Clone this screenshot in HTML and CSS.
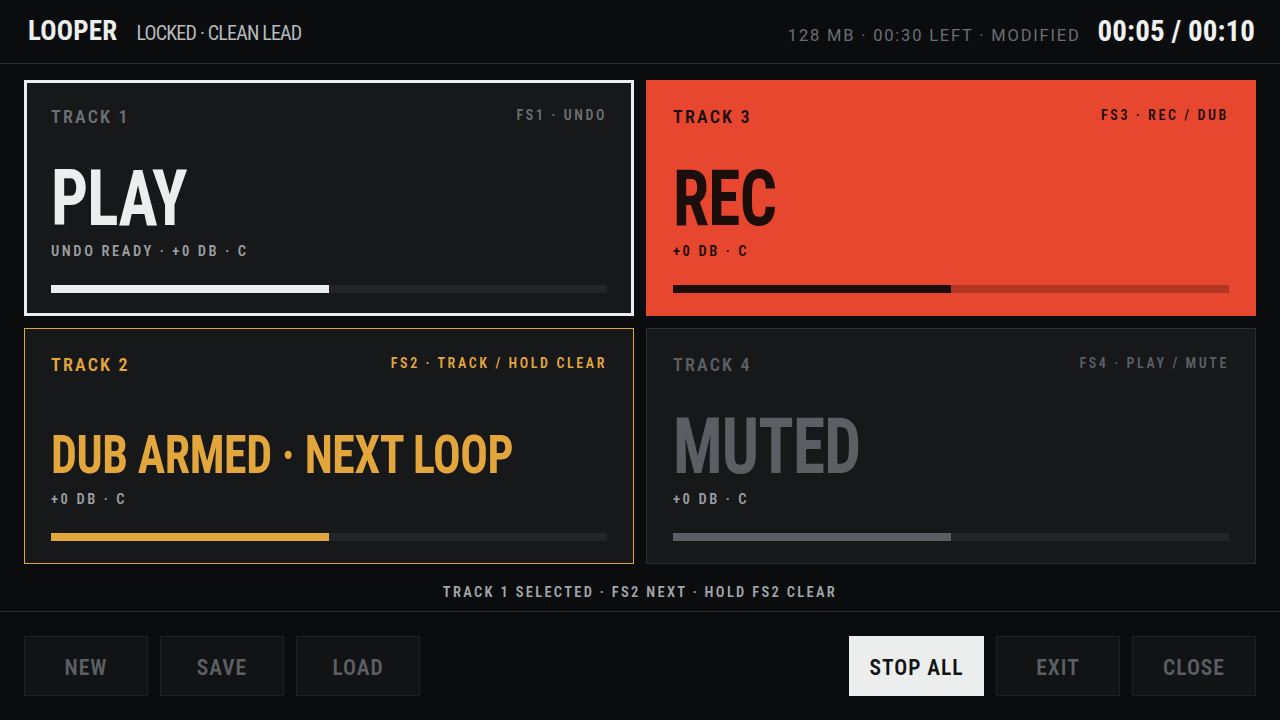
FILE: index.html
```html
<!DOCTYPE html>
<html lang="en">
<head>
<meta charset="utf-8">
<title>Looper</title>
<link rel="stylesheet" href="styles.css">
</head>
<body>
<div class="app">
  <header class="topbar">
    <div class="brand">
      <span class="logo">LOOPER</span>
      <span class="preset">LOCKED · CLEAN LEAD</span>
    </div>
    <div class="meta">
      <span class="info">128 MB · 00:30 LEFT · MODIFIED</span>
      <span class="time">00:05 / 00:10</span>
    </div>
  </header>

  <main class="grid">
    <section class="card card-play is-selected">
      <div class="card-head"><span class="track">TRACK 1</span><span class="hint">FS1 · UNDO</span></div>
      <div class="state">PLAY</div>
      <div class="sub">UNDO READY · +0 DB · C</div>
      <div class="bar"><div class="fill" style="width:50%"></div></div>
    </section>
    <section class="card card-rec">
      <div class="card-head"><span class="track">TRACK 3</span><span class="hint">FS3 · REC / DUB</span></div>
      <div class="state">REC</div>
      <div class="sub">+0 DB · C</div>
      <div class="bar"><div class="fill" style="width:50%"></div></div>
    </section>
    <section class="card card-dub">
      <div class="card-head"><span class="track">TRACK 2</span><span class="hint">FS2 · TRACK / HOLD CLEAR</span></div>
      <div class="state state-long">DUB ARMED · NEXT LOOP</div>
      <div class="sub">+0 DB · C</div>
      <div class="bar"><div class="fill" style="width:50%"></div></div>
    </section>
    <section class="card card-muted">
      <div class="card-head"><span class="track">TRACK 4</span><span class="hint">FS4 · PLAY / MUTE</span></div>
      <div class="state">MUTED</div>
      <div class="sub">+0 DB · C</div>
      <div class="bar"><div class="fill" style="width:50%"></div></div>
    </section>
  </main>

  <div class="status">TRACK 1 SELECTED · FS2 NEXT · HOLD FS2 CLEAR</div>

  <footer class="actions">
    <div class="group">
      <button class="btn">NEW</button>
      <button class="btn">SAVE</button>
      <button class="btn">LOAD</button>
    </div>
    <div class="group">
      <button class="btn btn-primary">STOP ALL</button>
      <button class="btn">EXIT</button>
      <button class="btn">CLOSE</button>
    </div>
  </footer>
</div>
</body>
</html>
```

FILE: styles.css
```css
* { box-sizing: border-box; }

html, body {
  margin: 0;
  padding: 0;
  background: #0b0c0e;
}

body {
  font-family: Roboto, "Open Sans", "DejaVu Sans Condensed", sans-serif;
  font-stretch: 75%;
  color: #eceeee;
}

.app {
  width: 1280px;
  height: 720px;
  display: flex;
  flex-direction: column;
  overflow: hidden;
}

/* Top bar */
.topbar {
  height: 64px;
  flex: none;
  display: flex;
  align-items: center;
  justify-content: space-between;
  padding: 0 25px 2px 28px;
  border-bottom: 1px solid #2a2c2f;
}

.brand {
  display: flex;
  align-items: baseline;
  gap: 19px;
}

.logo {
  font-size: 27px;
  font-weight: 700;
  letter-spacing: 0.2px;
  color: #eceeee;
}

.preset {
  font-size: 20px;
  font-weight: 400;
  letter-spacing: -0.8px;
  color: #b6babd;
}

.meta {
  display: flex;
  align-items: baseline;
  gap: 17px;
}

.info {
  font-stretch: 100%;
  font-size: 16.5px;
  letter-spacing: 1.8px;
  color: #6b6f73;
}

.time {
  font-size: 29px;
  font-weight: 700;
  letter-spacing: 0.1px;
  color: #f0f2f2;
}

/* Grid of tracks */
.grid {
  flex: none;
  display: grid;
  grid-template-columns: minmax(0, 1fr) minmax(0, 1fr);
  grid-template-rows: 236px 236px;
  gap: 12px;
  padding: 16px 24px 0;
}

.card {
  display: flex;
  flex-direction: column;
  min-width: 0;
  background: #161819;
  border: 1px solid #2b2e31;
  padding: 25px 26px 22px;
}

.card-head {
  display: flex;
  justify-content: space-between;
  align-items: center;
}

.track {
  font-size: 18px;
  font-weight: 600;
  letter-spacing: 2.2px;
  color: #6b6f73;
}

.hint {
  margin-bottom: 4px;
  font-size: 14px;
  font-weight: 600;
  letter-spacing: 2.6px;
  color: #6b6f73;
}

.state {
  margin-top: auto;
  font-size: 77px;
  line-height: 60px;
  font-weight: 700;
  letter-spacing: -1px;
  color: #eceeee;
  white-space: nowrap;
  transform: scaleX(0.85);
  transform-origin: left center;
}

.state-long {
  font-size: 54px;
  line-height: 44px;
  letter-spacing: -0.5px;
}

.sub {
  margin-top: 14px;
  font-size: 14.5px;
  line-height: 18px;
  font-weight: 600;
  letter-spacing: 2.6px;
  color: #9a9ea2;
}

.bar {
  margin-top: 24px;
  height: 8px;
  background: #232628;
}

.fill {
  height: 100%;
  background: #eceeee;
}

.card-play.is-selected {
  border-color: #eceeee;
  box-shadow: inset 0 0 0 2px #eceeee;
}

.card-rec {
  background: #e8472f;
  border-color: #e8472f;
}
.card-rec .track,
.card-rec .hint,
.card-rec .state,
.card-rec .sub { color: #1b0e0b; }
.card-rec .bar { background: #b13724; }
.card-rec .fill { background: #1b0e0b; }

.card-dub { border-color: #e1a53d; }
.card-dub .track,
.card-dub .hint,
.card-dub .state { color: #e2a63c; }
.card-dub .fill { background: #e2a63c; }

.card-muted .track,
.card-muted .hint { color: #5b5f63; }
.card-muted .state { color: #5b5f63; }
.card-muted .fill { background: #5b5f63; }

/* Status line */
.status {
  flex: none;
  height: 48px;
  padding-top: 9px;
  display: flex;
  align-items: center;
  justify-content: center;
  font-size: 14.5px;
  font-weight: 600;
  letter-spacing: 2.3px;
  color: #a2a6aa;
  border-bottom: 1px solid #2a2c2f;
}

/* Action buttons */
.actions {
  flex: none;
  display: flex;
  justify-content: space-between;
  padding: 24px 24px 0;
}

.group {
  display: flex;
  gap: 12px;
}

.btn {
  width: 124px;
  height: 60px;
  margin: 0;
  padding: 2px 0 0;
  background: #111315;
  border: 1px solid #1f2225;
  color: #5b5f63;
  font-family: inherit;
  font-stretch: 75%;
  font-size: 21.5px;
  font-weight: 600;
  letter-spacing: 1px;
  cursor: pointer;
}

.btn-primary {
  width: 135px;
  background: #eceeee;
  border-color: #eceeee;
  color: #111315;
}
```
